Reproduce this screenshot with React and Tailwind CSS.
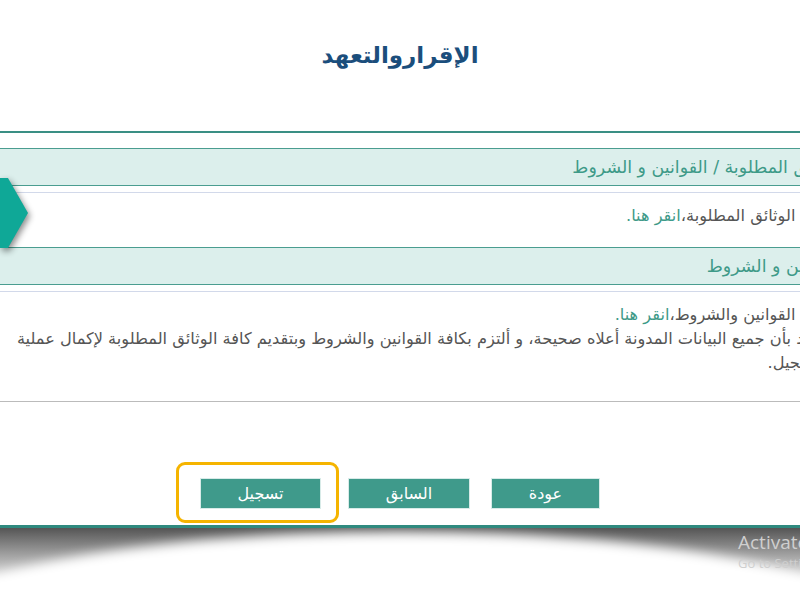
import React from "react";

const rows = [
  {
    title: "الوثائق المطلوبة / القوانين و الشروط",
    lines: [
      <>
        لفتح الوثائق المطلوبة،<span className="text-[#3e9a88]">انقر هنا.</span>
      </>,
    ],
    h: "h-[54px] pt-[11px]",
  },
  {
    title: "القوانين و الشروط",
    lines: [
      <>
        لفتح القوانين والشروط،<span className="text-[#3e9a88]">انقر هنا.</span>
      </>,
      "أتعهد بأن جميع البيانات المدونة أعلاه صحيحة، و ألتزم بكافة القوانين والشروط وبتقديم كافة الوثائق المطلوبة لإكمال عملية",
      "التسجيل.",
    ],
    h: "h-[110px] pt-[11px] border-b border-[#bbbbbb]",
  },
];

const Button = ({ label, w }) => (
  <button className={`${w} h-[31px] bg-[#3f9a8b] text-white text-[16px] border border-[#d8ebe8]`}>
    {label}
  </button>
);

export default function App() {
  return (
    <div className="relative w-[800px] h-[600px] overflow-hidden bg-white font-['DejaVu_Sans',sans-serif]">
      {/* Title */}
      <div className="h-[131px] flex justify-center pt-[40px]">
        <h1 dir="rtl" className="text-[23px] font-bold text-[#1b4e7c] leading-[30px]">
          الإقراروالتعهد
        </h1>
      </div>

      {/* Panel */}
      <div className="border-t-2 border-[#3a8f84]">
        <div className="h-[15px]" />
        <div className="w-[842px]" dir="rtl">
          {rows.map((row, i) => (
            <div key={i}>
              <div className="h-[38px] bg-[#dcefec] border-y border-[#4a9d90] flex items-center text-[17.4px] text-[#3e9a88] whitespace-nowrap">
                {row.title}
              </div>
              <div className="h-[6px]" />
              <div className="border-t border-[#d2d9ea]" />
              <div className={`${row.h} pr-[13px] text-[16.2px] leading-[24px] text-[#555] whitespace-nowrap`}>
                {row.lines.map((l, j) => (
                  <div key={j}>{l}</div>
                ))}
              </div>
            </div>
          ))}
        </div>
      </div>

      {/* Buttons */}
      <div className="flex mt-[76px] pl-[200px]">
        <Button label="تسجيل" w="w-[121px]" />
        <div className="w-[27px]" />
        <Button label="السابق" w="w-[122px]" />
        <div className="w-[21px]" />
        <Button label="عودة" w="w-[109px]" />
      </div>

      {/* Bottom edge with page-curl shadow */}
      <div className="mt-[16px] h-[3px] bg-[#2f8a7f]" />
      <div className="relative h-[80px] bg-[linear-gradient(#555,#999_30%,#fff_75%)] overflow-hidden">
        <div className="absolute left-[-110px] right-[-110px] top-[4px] h-[220px] rounded-[50%] bg-white blur-[6px]" />
        <div className="absolute left-[738px] top-[2px] font-['Open_Sans',sans-serif] text-[#cfcfcf] whitespace-nowrap">
          <div className="text-[19px] leading-[24px]">Activate Windows</div>
          <div className="text-[13px] leading-[18px]">Go to Settings to activate Windows.</div>
        </div>
      </div>

      {/* Left arrow tab */}
      <svg className="absolute left-0 top-[176px] drop-shadow-[2px_3px_3px_rgba(0,0,0,0.45)]" width="34" height="76" viewBox="0 0 34 76">
        <polygon points="0,2 8,2 28,37 8,72 0,72" fill="#0fa897" />
      </svg>

      {/* Highlight ring around submit */}
      <div className="absolute left-[176px] top-[462px] w-[163px] h-[61px] rounded-[9px] border-[3px] border-[#f5b400]" />
    </div>
  );
}
